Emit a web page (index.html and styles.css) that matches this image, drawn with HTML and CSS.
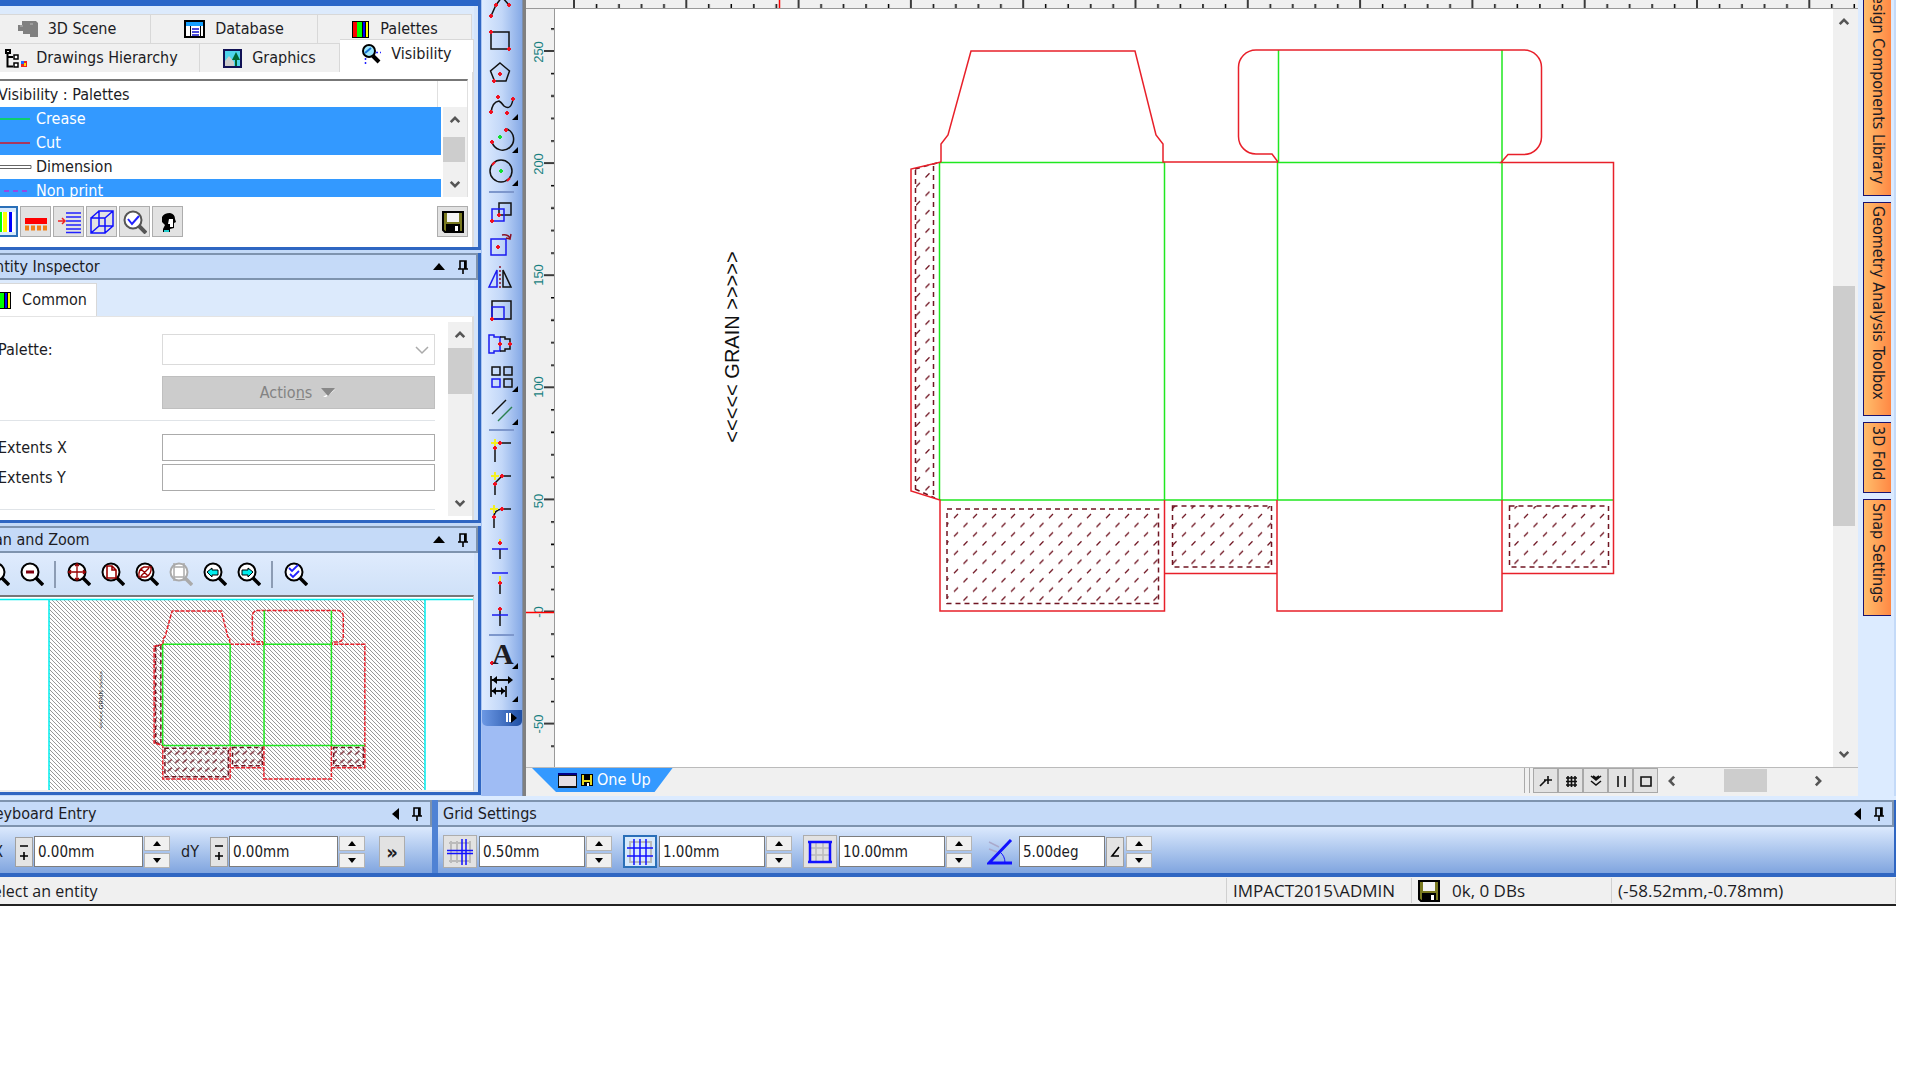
FILE: index.html
```html
<!DOCTYPE html>
<html lang="en">
<head>
<meta charset="UTF-8">
<meta name="viewport" content="width=device-width, initial-scale=1.0">
<title>Carton Designer - One Up</title>
<link rel="stylesheet" href="styles.css">
</head>
<body>

<!-- shared shapes -->
<svg class="defs" width="0" height="0" aria-hidden="true">
    <defs>
        <symbol id="i-up" viewBox="0 0 14 14"><path d="M2 9.500l5-5 5 5" fill="none" stroke="#555" stroke-width="3"/></symbol>
        <symbol id="i-down" viewBox="0 0 14 14"><path d="M2 4.500l5 5 5-5" fill="none" stroke="#555" stroke-width="3"/></symbol>
        <symbol id="i-left" viewBox="0 0 14 14"><path d="M9.500 2l-5 5 5 5" fill="none" stroke="#555" stroke-width="3"/></symbol>
        <symbol id="i-right" viewBox="0 0 14 14"><path d="M4.500 2l5 5-5 5" fill="none" stroke="#555" stroke-width="3"/></symbol>
        <symbol id="i-pin" viewBox="0 0 12 14"><path d="M3 1h6v8H3zM1 9h10M6 9v5" fill="none" stroke="#000" stroke-width="1.600"/><path d="M7 1h2v8H7z"/></symbol>
        <symbol id="i-palette" viewBox="0 0 19 19"><path d="M1 1h17v17H1z"/><path fill="#f00" d="M2 2h4v15H2z"/><path fill="#0f0" d="M6 2h5v15H6z"/><path fill="#00f" d="M12 2h2v15h-2z"/><path fill="#ff0" d="M15 2h2v15h-2z"/></symbol>
        <symbol id="i-floppy" viewBox="0 0 22 22"><path d="M1 1h20v20H3l-2-2z" fill="#7a7a20" stroke="#000" stroke-width="2"/><path d="M5 2h12v9H5z" fill="#f4f4f4"/><path d="M4 13h14v8H4z"/><path d="M13 15h3v5h-3z" fill="#fff"/></symbol>
        <symbol id="i-lens" viewBox="0 0 24 24"><circle cx="10" cy="10" r="8.500" fill="#fff" stroke="currentColor" stroke-width="2"/><path d="M16 16l7 7" stroke="currentColor" stroke-width="3.500"/></symbol>

        <pattern id="glue" width="19" height="18.400" patternUnits="userSpaceOnUse" x="952" y="513">
            <path d="M2 5l4-4M11.500 14l4-4" stroke="#701522" stroke-width="1.300"/>
        </pattern>
        <pattern id="glue-small" width="25" height="28" patternUnits="userSpaceOnUse" x="952" y="510">
            <path d="M4 20l14-12" stroke="#701522" stroke-width="4.500"/>
        </pattern>
        <pattern id="hatch" width="4" height="4" patternUnits="userSpaceOnUse">
            <path d="M-1-1l6 6M3-1l2 2M-1 3l2 2" stroke="#8c8c8c" stroke-width=".9"/>
        </pattern>

        <g id="cut">
            <path d="M941 162v-18l7-9 23-84h164l21 84 7 9v18h115"/>
            <path d="M1278 162l-6-8h-16a17.500 17.500 0 0 1-17.500-17.500V68A17.500 17.500 0 0 1 1256 50h268a17.500 17.500 0 0 1 17.500 18v69a17.500 17.500 0 0 1-17.500 17.500h-16l-7 8h112.500v411H1502"/>
            <path d="M941 162l-30 7v322l29 9v111h224.500V500M1164.500 573.500H1277M1277 500v111h225V500"/>
        </g>
        <g id="crease">
            <path d="M940 162.500h224M1278 162.500h224M940 500h673.500M939.500 162v338M1164.500 162v338M1277.500 162v338M1278.500 50v112M1502 50v450"/>
        </g>
        <g id="glue-edge">
            <path d="M915.500 170v319M933.500 166v332M915 169l22-6M915 489l20 9"/>
            <path d="M947 509h211.500v94.500H947zM1172.500 506h99v61h-99zM1509.500 506h99v61h-99z"/>
        </g>
        <path id="glue-area" d="M916 170l17-5v333l-17-7zM947 509h211.500v94.500H947zM1172.500 506h99v61h-99zM1509.500 506h99v61h-99z"/>
    </defs>
</svg>

<div class="app">
    <main class="work">

        <!-- docked panels -->
        <aside class="dock-left">
            <section class="panel">
                <div class="panel-strip"></div>
                <div class="tabs">
                    <div class="tab-row">
                        <button class="tab"><svg width="20" height="16" viewBox="0 0 20 16"><path d="M4 0h14l2 2v14h-8v-3H5v-3H0V4h4z" fill="#808080"/><path d="M2 5h3M12 3h3" stroke="#bbb"/></svg>3D Scene</button>
                        <button class="tab"><svg width="21" height="18" viewBox="0 0 21 18"><path d="M1 1h19v16H1z" fill="#fff" stroke="#000" stroke-width="2"/><path d="M2 2h17v4H2z" fill="#16a0ff"/><path d="M6.500 6v11M16.500 6v11" stroke="#000"/><path d="M8 9h7M8 12h7M8 15h7" stroke="#11c" stroke-width="1.500"/></svg>Database</button>
                        <button class="tab tab-last"><svg width="19" height="19"><use href="#i-palette"/></svg>Palettes</button>
                    </div>
                    <div class="tab-row">
                        <button class="tab tab-wide"><svg width="23" height="19" viewBox="0 0 23 19"><path d="M2.500 3v14.500H8M3 8h5M1 1h4v3H1z" fill="none" stroke="#000" stroke-width="2"/><path d="M9 6h4v4H9zM9 14h4v4H9z" fill="#fff" stroke="#000" stroke-width="1.500"/><path d="M16 12h6v6h-6z" fill="#e22"/><path d="M16 12h3v3h-3z" fill="#26f"/><path d="M19 14h2v3h-2z" fill="#fd0"/></svg>Drawings Hierarchy</button>
                        <button class="tab tab-mid"><svg width="19" height="19" viewBox="0 0 19 19"><path d="M1 1h17v17H1z" fill="#4fd4ec" stroke="#115" stroke-width="2"/><path d="M2 12l4-5 5 6v4H2z" fill="#ccc"/><path d="M13 3l4 8h-3v6h-2v-6H9z" fill="#063"/></svg>Graphics</button>
                        <button class="tab tab-active"><svg width="20" height="20" viewBox="0 0 20 20"><circle cx="8" cy="7" r="6" fill="#9fe8ff" stroke="#000" stroke-width="2"/><path d="M4 9l6-5" stroke="#1570d0" stroke-width="2"/><path d="M12 12l6 6" stroke="#000" stroke-width="4"/><path d="M15 8.500h5M4.500 14v6" stroke="#22f" stroke-width="1.500" stroke-dasharray="2 2"/></svg>Visibility</button>
                    </div>
                </div>
                <div class="panel-page visibility">
                    <div class="list">
                        <div class="list-head">Visibility : Palettes</div>
                        <div class="list-body">
                            <ul class="list-items">
                                <li class="selected"><svg width="32" height="6"><path d="M0 3h32" stroke="#00e040" stroke-width="1.500"/></svg>Crease</li>
                                <li class="selected"><svg width="32" height="6"><path d="M0 3h32" stroke="#d01828" stroke-width="1.500"/></svg>Cut</li>
                                <li><svg width="34" height="6"><path d="M-1 1.500h34v3H-1z" fill="#fff" stroke="#666"/></svg>Dimension</li>
                                <li class="selected"><svg width="32" height="6"><path d="M6 3h25" stroke="#b030e0" stroke-width="1.500" stroke-dasharray="5 4"/></svg>Non print</li>
                            </ul>
                            <div class="scroll-v list-scroll">
                                <button aria-label="Scroll up"><svg width="12" height="12"><use href="#i-up"/></svg></button>
                                <span class="thumb thumb-s"></span>
                                <button class="push" aria-label="Scroll down"><svg width="12" height="12"><use href="#i-down"/></svg></button>
                            </div>
                        </div>
                    </div>
                    <div class="button-row">
                        <button class="tool tool-on" aria-label="Palettes"><svg width="24" height="24" viewBox="0 0 24 24"><path fill="#fff" d="M0 2h24v20H0z"/><path fill="#0f0" d="M7 2h4v20H7z"/><path fill="#ff0" d="M12 2h4v20h-4z"/><path fill="#00f" d="M18 2h3v20h-3z"/></svg></button>
                        <button class="tool" aria-label="Line styles"><svg width="24" height="24" viewBox="0 0 24 24"><path fill="#f00" d="M1 8h22v6H1z"/><path d="M1 18h22" stroke="#f08018" stroke-width="5" stroke-dasharray="4 2"/></svg></button>
                        <button class="tool" aria-label="Layers"><svg width="24" height="24" viewBox="0 0 24 24"><path d="M9 3h15M9 7h15M9 11h15M9 15h15M9 19h15M9 22.500h15" stroke="#22f" stroke-width="1.500"/><path d="M1 11h7M5 8l3 3-3 3" fill="none" stroke="#e22" stroke-width="1.500"/></svg></button>
                        <button class="tool" aria-label="3D box"><svg width="24" height="24" viewBox="0 0 24 24"><path d="M1 8h14v15H1zM9 1h14v15H9zM1 8l8-7M15 8l8-7M1 23l8-7M15 23l8-7" fill="none" stroke="#11f" stroke-width="1.500"/></svg></button>
                        <button class="tool" aria-label="Inspect"><svg width="24" height="24" viewBox="0 0 24 24"><circle cx="10" cy="10" r="8.500" fill="#fff" stroke="#555" stroke-width="2"/><path d="M16 16l7 7" stroke="#555" stroke-width="4"/><path d="M5 9l4 5 7-8" fill="none" stroke="#22f" stroke-width="2"/></svg></button>
                        <button class="tool" aria-label="User"><svg width="24" height="24" viewBox="0 0 24 24"><path d="M6 7q2-4 8-4 5 1 5 6l1 3-2 1v5l-4 1v3H7v-3l2-4-3-3z"/><path d="M13 9h4v8h-3v-3h-2z" fill="#fff"/><path d="M8 20h5v2H8z" fill="#2cc"/></svg></button>
                        <button class="tool push-x" aria-label="Save"><svg width="22" height="22"><use href="#i-floppy"/></svg></button>
                    </div>
                </div>
            </section>

            <section class="panel">
                <header class="panel-head"><h2>Entity Inspector</h2><span class="caret-up"></span><svg width="12" height="14"><use href="#i-pin"/></svg></header>
                <div class="tabs tabs-single">
                    <button class="tab tab-common"><svg width="19" height="19"><use href="#i-palette"/></svg>Common</button>
                </div>
                <div class="panel-page inspector">
                    <form class="fields">
                        <div class="field">
                            <label for="palette">Palette:</label>
                            <span class="select-wrap">
                                <select id="palette" disabled><option></option></select>
                                <svg width="14" height="14" viewBox="0 0 14 14"><path d="M1 4l6 6 6-6" fill="none" stroke="#aaa" stroke-width="1.500"/></svg>
                            </span>
                        </div>
                        <button type="button" class="actions" disabled>Actio<u>n</u>s<svg width="16" height="10" viewBox="0 0 16 10"><path d="M2 9h3l10-8z" fill="#fff"/><path d="M0 0h14L7 8z" fill="#888"/></svg></button>
                        <hr>
                        <div class="field"><label for="ext-x">Extents X</label><input id="ext-x" type="text"></div>
                        <div class="field"><label for="ext-y">Extents Y</label><input id="ext-y" type="text"></div>
                        <hr class="last">
                    </form>
                    <div class="scroll-v">
                        <button aria-label="Scroll up"><svg width="12" height="12"><use href="#i-up"/></svg></button>
                        <span class="thumb thumb-m"></span>
                        <button class="push" aria-label="Scroll down"><svg width="12" height="12"><use href="#i-down"/></svg></button>
                    </div>
                </div>
            </section>

            <section class="panel">
                <header class="panel-head"><h2>Pan and Zoom</h2><span class="caret-up"></span><svg width="12" height="14"><use href="#i-pin"/></svg></header>
                <div class="zoom-bar">
                    <button aria-label="Zoom in"><svg width="24" height="24" viewBox="0 0 24 24"><use href="#i-lens"/></svg></button>
                    <button aria-label="Zoom out"><svg width="24" height="24" viewBox="0 0 24 24"><use href="#i-lens"/><path d="M6 10h8" stroke="#800010" stroke-width="3"/></svg></button>
                    <i class="bar-sep"></i>
                    <button aria-label="Zoom extents"><svg width="24" height="24" viewBox="0 0 24 24"><use href="#i-lens"/><path d="M1 10h18M10 1v18M8 4l2-2 2 2M8 16l2 2 2-2M4 8l-2 2 2 2M16 8l2 2-2 2" fill="none" stroke="#900" stroke-width="1.300"/></svg></button>
                    <button aria-label="Zoom page"><svg width="24" height="24" viewBox="0 0 24 24"><use href="#i-lens"/><path d="M6 4h5l4 4v8H6zM11 4v4h4" fill="none" stroke="#900" stroke-width="1.600"/></svg></button>
                    <button aria-label="Zoom design"><svg width="24" height="24" viewBox="0 0 24 24"><use href="#i-lens"/><path d="M4 15q-1-8 5-10h7q1 7-5 10zM6 7l7 7M6 14l8-8" fill="none" stroke="#900" stroke-width="1.400"/></svg></button>
                    <button class="off" aria-label="Zoom selection" disabled><svg width="24" height="24" viewBox="0 0 24 24"><use href="#i-lens"/><path d="M5 5h10v10H5zM5 1v18M15 1v18" fill="none" stroke="#aaa" stroke-width="1.500"/></svg></button>
                    <button aria-label="Previous view"><svg width="24" height="24" viewBox="0 0 24 24"><use href="#i-lens"/><path d="M4 10l5-4v2h6v5H9v2z" fill="#0ee" stroke="#000"/></svg></button>
                    <button aria-label="Next view"><svg width="24" height="24" viewBox="0 0 24 24"><use href="#i-lens"/><path d="M16 10l-5-4v2H5v5h6v2z" fill="#0ee" stroke="#000"/></svg></button>
                    <i class="bar-sep"></i>
                    <button aria-label="Zoom options"><svg width="24" height="24" viewBox="0 0 24 24"><use href="#i-lens"/><path d="M5 6l3 3 6-6M6 12l3 3 6-6" fill="none" stroke="#22f" stroke-width="1.800"/></svg></button>
                </div>
                <div class="preview">
                    <svg width="492" height="193" viewBox="-16 597 492 193">
                        <path d="M49 599h376v191H49z" fill="url(#hatch)"/>
                        <path d="M-16 599.500h492M49 599v191M425 599v191" stroke="#0ee" stroke-width="1.500"/>
                        <g transform="translate(-119.200 595.600) scale(.3)">
                            <use href="#glue-edge" class="thin glue-line"/>
                            <use href="#glue-area" fill="url(#glue-small)"/>
                            <use href="#cut" class="thin cut-line dashed"/>
                            <use href="#crease" class="thin crease-line"/>
                            <text class="grain" transform="translate(739 347) rotate(-90)" text-anchor="middle">&lt;&lt;&lt;&lt;&lt; GRAIN &gt;&gt;&gt;&gt;&gt;</text>
                        </g>
                    </svg>
                </div>
            </section>
        </aside>

        <!-- drawing tools -->
        <nav class="toolbox">
            <div class="toolbox-tools">
                <button aria-label="Line"><svg viewBox="0 0 32 32"><path d="M5 25l5-11 6-8 7 8"/><path class="r" d="M3 25h4M5 23v4M8 14h4M10 12v4M21 14h4M23 12v4"/></svg></button>
                <button aria-label="Rectangle"><svg viewBox="0 0 32 32"><path d="M5 8h18v17H5z"/><path class="r" d="M3 8h4M5 6v4M21 25h4M23 23v4"/></svg></button>
                <button aria-label="Polygon"><svg viewBox="0 0 32 32"><path d="M14 6l9.500 8L20 24H8.500l-4-10z"/><path class="r" d="M12 17h4M14 15v4M6 24h4M8 22v4"/></svg></button>
                <button aria-label="Spline"><svg viewBox="0 0 32 32"><path d="M5 23q1-11 8-12 2 1 5 5 7 5 9-7"/><path class="r" d="M3 22h4M5 20v4M10 7h4M12 5v4M19 23h4M21 21v4M25 9h4M27 7v4"/><path class="more" d="M32 24v6h-6z"/></svg></button>
                <button aria-label="Arc"><svg viewBox="0 0 32 32"><path d="M6 19A11 11 0 1 0 21 6"/><path class="r" d="M4 19h4M6 17v4M18 7h4M20 5v4"/><path class="g" d="M12 14h4M14 12v4"/><path class="more" d="M32 24v6h-6z"/></svg></button>
                <button aria-label="Circle"><svg viewBox="0 0 32 32"><circle cx="15" cy="15" r="11"/><path class="r" d="M6 9l3-3M21 25l3-3"/><path class="g" d="M13 15h4M15 13v4"/><path class="more" d="M32 24v6h-6z"/></svg></button>
                <hr>
                <button aria-label="Copy"><svg viewBox="0 0 32 32"><path d="M13 7h12v12H13z"/><path class="b" d="M6 13h12v12H6z"/><path class="r" d="M11 19h4M13 17v4M4 25h4M6 23v4"/></svg></button>
                <button aria-label="Rotate"><svg viewBox="0 0 32 32"><path class="b" d="M5 10h15v16H5z"/><path class="r" d="M10 18h4M12 16v4"/><path class="m" d="M16 6q7-1 8 4M20 9l4 1 1-5"/></svg></button>
                <button aria-label="Mirror"><svg viewBox="0 0 32 32"><path class="b" d="M11 8v17H3z"/><path d="M17 8v17h8z"/><path class="m" d="M14 4v24" stroke-dasharray="2 2"/></svg></button>
                <button aria-label="Scale"><svg viewBox="0 0 32 32"><path d="M6 6h19v18H6z"/><path class="b" d="M6 12h12v12H6z"/><path class="r" d="M4 24h4M6 22v4"/></svg></button>
                <button aria-label="Stretch"><svg viewBox="0 0 32 32"><path class="b" d="M14 9H8V7H3v18h5v-2h6z" stroke-dasharray="30 0"/><path d="M14 9h5v2h5v10h-5v2h-5"/><path class="r" d="M12 16h4M14 14v4M22 16h4M24 14v4"/></svg></button>
                <button aria-label="Array"><svg viewBox="0 0 32 32"><path d="M6 6h8v8H6zM18 6h8v8h-8zM18 18h8v8h-8z"/><path class="b" d="M6 18h8v8H6z"/><path class="more" d="M32 25v6h-6z"/></svg></button>
                <button aria-label="Offset"><svg viewBox="0 0 32 32"><path d="M6 20L20 6"/><path d="M12 27l14-14" stroke="#2a8050"/><path class="more" d="M32 25v6h-6z"/></svg></button>
                <hr>
                <button aria-label="Corner"><svg viewBox="0 0 32 32"><path d="M9 28V9h16"/><path class="y" d="M5 9h8M9 5v8"/><path class="r" d="M12 9h4M14 7v4M7 14h4M9 12v4"/></svg></button>
                <button aria-label="Chamfer"><svg viewBox="0 0 32 32"><path d="M9 28V16l7-7h9"/><path class="y" d="M5 9h8M9 5v8"/><path class="r" d="M14 9h4M16 7v4M7 17h4M9 15v4"/></svg></button>
                <button aria-label="Fillet"><svg viewBox="0 0 32 32"><path d="M8 28V17q0-7 8-8h9"/><path class="y" d="M4 9h8M8 5v8"/><path class="r" d="M14 9h4M16 7v4M6 17h4M8 15v4"/></svg></button>
                <button aria-label="Extend"><svg viewBox="0 0 32 32"><path d="M14 16v10"/><path class="b" d="M6 16h16"/><path class="y" d="M14 6v4"/><path class="r" d="M12 10h4M14 8v4"/></svg></button>
                <button aria-label="Trim"><svg viewBox="0 0 32 32"><path d="M14 18v10"/><path class="b" d="M6 7h16"/><path class="y" d="M14 10v5"/><path class="r" d="M12 17h4M14 15v4"/></svg></button>
                <button aria-label="Split"><svg viewBox="0 0 32 32"><path d="M14 10v17"/><path class="b" d="M6 16h16"/><path class="r" d="M12 10h4M14 8v4"/></svg></button>
                <hr>
                <button aria-label="Text"><span class="letter">A</span><svg viewBox="0 0 32 32"><path class="r" d="M4 24h4M6 22v4"/><path class="more" d="M32 24v6h-6z"/></svg></button>
                <button aria-label="Dimension"><svg viewBox="0 0 32 32"><path d="M5 4v21M5 8h20M5 19h14M20 14v11" stroke-width="1.800"/><path class="more" d="M6 8l5-4v8zM27 8l-5-4v8zM6 19l4-4v8zM19 19l-4-4v8zM32 24v6h-6z"/></svg></button>
            </div>
            <button class="toolbox-foot" aria-label="More tools"><svg viewBox="0 0 12 12"><path d="M1 1v9M4 1v9" stroke="#fff" stroke-width="2"/><path d="M5 1l6 5-6 5z"/></svg></button>
        </nav>

        <!-- drawing -->
        <section class="drawing">
            <div class="ruler-corner"></div>
            <svg class="ruler-top" height="9">
                <defs>
                    <pattern id="ticks-x" x="18" width="112.300" height="9" patternUnits="userSpaceOnUse">
                        <path d="M1 0v9M23.500 4v5M46 4v5M68.500 4v5M91 4v5" stroke="#000" stroke-width="1.500"/>
                    </pattern>
                </defs>
                <rect width="100%" height="8" fill="url(#ticks-x)"/>
                <path d="M224.500 0v8" stroke="#f00" stroke-width="1.500"/>
            </svg>
            <svg class="ruler-side" width="28" height="758" viewBox="526 9 28 758">
                <defs>
                    <pattern id="ticks-y" x="526" y="50" width="28" height="112.100" patternUnits="userSpaceOnUse">
                        <path d="M18 1h10M25 23.500h3M25 46h3M25 68.500h3M25 91h3" stroke="#000" stroke-width="1.500"/>
                    </pattern>
                </defs>
                <rect x="526" y="9" width="28" height="758" fill="url(#ticks-y)"/>
                <g class="ruler-num" text-anchor="middle">
                    <text transform="translate(543 52) rotate(-90)">250</text>
                    <text transform="translate(543 164) rotate(-90)">200</text>
                    <text transform="translate(543 275) rotate(-90)">150</text>
                    <text transform="translate(543 387) rotate(-90)">100</text>
                    <text transform="translate(543 501) rotate(-90)">50</text>
                    <text transform="translate(543 612) rotate(-90)">-0</text>
                    <text transform="translate(543 724) rotate(-90)">-50</text>
                </g>
                <path d="M526 612.500h28" stroke="#f00" stroke-width="1.500"/>
            </svg>
            <svg class="sheet" viewBox="555 9 1278 758" height="758">
                <use href="#glue-area" fill="url(#glue)"/>
                <use href="#glue-edge" class="glue-line"/>
                <use href="#crease" class="crease-line"/>
                <use href="#cut" class="cut-line"/>
                <text class="grain" transform="translate(739 347) rotate(-90)" text-anchor="middle">&lt;&lt;&lt;&lt;&lt; GRAIN &gt;&gt;&gt;&gt;&gt;</text>
            </svg>
            <div class="scroll-v sheet-scroll">
                <button aria-label="Scroll up"><svg width="12" height="12"><use href="#i-up"/></svg></button>
                <span class="thumb thumb-l"></span>
                <button class="push" aria-label="Scroll down"><svg width="12" height="12"><use href="#i-down"/></svg></button>
            </div>
            <footer class="sheet-foot">
                <button class="sheet-tab">
                    <svg width="19" height="15" viewBox="0 0 19 15"><path d="M0 0h19v15H0z" fill="#111"/><path d="M1 3h17v10H1z" fill="#e4dfe4"/><path d="M0 0h19v2H0z" fill="#008"/></svg>
                    <svg width="12" height="12" viewBox="0 0 12 12"><path d="M0 0h12v12H0z"/><path d="M1 1h2v10H1zM9 1h2v10H9zM3 6h6v2H3z" fill="#e8d820"/><path d="M6 9h2v3H6z" fill="#fff"/></svg>
                    One Up
                </button>
                <i class="grip"></i>
                <button class="view" aria-label="Snap"><svg viewBox="0 0 14 14"><path d="M1 12l6-6M5 6h8M9 2v8"/></svg></button>
                <button class="view" aria-label="Grid"><svg viewBox="0 0 14 14"><path d="M2 4h11M2 7.500h11M2 11h11M4 2v11M7.500 2v11M11 2v11"/></svg></button>
                <button class="view" aria-label="Show all"><svg viewBox="0 0 14 14"><path d="M2 2l5 4 5-4M2 7l5 4 5-4M4 2l3 2 3-2"/></svg></button>
                <button class="view" aria-label="Split"><svg viewBox="0 0 14 14"><path d="M4 2v11M11 2v11"/></svg></button>
                <button class="view" aria-label="Single"><svg viewBox="0 0 14 14"><path d="M2 3h10v9H2z"/></svg></button>
                <div class="scroll-h">
                    <button aria-label="Scroll left"><svg width="12" height="12"><use href="#i-left"/></svg></button>
                    <span class="thumb-h"></span>
                    <button aria-label="Scroll right"><svg width="12" height="12"><use href="#i-right"/></svg></button>
                </div>
            </footer>
        </section>

        <nav class="dock-right">
            <button class="side-tab side-tab-first">Design Components Library</button>
            <button class="side-tab side-tab-geo">Geometry Analysis Toolbox</button>
            <button class="side-tab side-tab-fold">3D Fold</button>
            <button class="side-tab side-tab-snap">Snap Settings</button>
        </nav>
    </main>

    <div class="dock-bottom">
        <section class="bar bar-keys">
            <header class="panel-head"><h2>Keyboard Entry</h2><span class="caret-left"></span><svg width="12" height="14"><use href="#i-pin"/></svg></header>
            <div class="bar-body">
                <label for="dx">dX</label>
                <button class="sign" aria-label="Change sign"><svg viewBox="0 0 10 20"><path d="M1 4h8M1 14h8M5 10v8"/></svg></button>
                <input id="dx" type="text" value="0.00mm">
                <span class="spin"><button aria-label="Increase"></button><button aria-label="Decrease"></button></span>
                <label for="dy" class="label-dy">dY</label>
                <button class="sign" aria-label="Change sign"><svg viewBox="0 0 10 20"><path d="M1 4h8M1 14h8M5 10v8"/></svg></button>
                <input id="dy" type="text" value="0.00mm">
                <span class="spin"><button aria-label="Increase"></button><button aria-label="Decrease"></button></span>
                <button class="tool expand">»</button>
            </div>
        </section>
        <section class="bar bar-grid">
            <header class="panel-head"><h2>Grid Settings</h2><span class="caret-left"></span><svg width="12" height="14"><use href="#i-pin"/></svg></header>
            <div class="bar-body">
                <div class="step">
                    <button class="tool" aria-label="Snap step"><svg width="26" height="26" viewBox="0 0 26 26"><path d="M2 4h22M2 22h22M4 2v22M10 2v22M23 2v22" stroke="#bbb" stroke-width="2"/><path d="M0 11.500h26M0 14.500h26M15 0v26M19 0v26" stroke="#11f" stroke-width="1.500"/></svg></button>
                    <input type="text" value="0.50mm" aria-label="Snap step">
                    <span class="spin"><button aria-label="Increase"></button><button aria-label="Decrease"></button></span>
                </div>
                <div class="step">
                    <button class="tool tool-on" aria-label="Grid step"><svg width="26" height="26" viewBox="0 0 26 26"><path d="M2 3h22M2 23h22M3 2v22M24 2v22" stroke="#bbb" stroke-width="2"/><path d="M0 9h26M0 17h26M7 0v26M13 0v26M19 0v26" stroke="#11f" stroke-width="1.500"/></svg></button>
                    <input type="text" value="1.00mm" aria-label="Grid step">
                    <span class="spin"><button aria-label="Increase"></button><button aria-label="Decrease"></button></span>
                </div>
                <div class="step">
                    <button class="tool" aria-label="Major grid"><svg width="26" height="26" viewBox="0 0 26 26"><path d="M3 9h20M3 16h20M9 3v20M16 3v20" stroke="#bbb" stroke-width="1.500"/><path d="M3 3h20v20H3zM1 3h24M1 23h24" fill="none" stroke="#11f" stroke-width="2.500"/></svg></button>
                    <input type="text" value="10.00mm" aria-label="Major grid">
                    <span class="spin"><button aria-label="Increase"></button><button aria-label="Decrease"></button></span>
                </div>
                <div class="step">
                    <button class="tool tool-flat" aria-label="Angle step"><svg width="26" height="26" viewBox="0 0 26 26"><path d="M2 3l10 5M2 10l8 3" stroke="#aac" stroke-width="1.500"/><path d="M24 1L2 24h23" fill="none" stroke="#11f" stroke-width="3"/><path d="M13 13q5 4 5 11" fill="none" stroke="#11f"/></svg></button>
                    <input class="short" type="text" value="5.00deg" aria-label="Angle step">
                    <button class="sign sign-angle" aria-label="Angle mode"><svg viewBox="0 0 10 20"><path d="M9 5L2 14h7"/></svg></button>
                    <span class="spin"><button aria-label="Increase"></button><button aria-label="Decrease"></button></span>
                </div>
            </div>
        </section>
    </div>

    <footer class="status">
        <span class="status-text">Select an entity</span>
        <span class="status-user">IMPACT2015\ADMIN</span>
        <span class="status-db"><svg width="22" height="22"><use href="#i-floppy"/></svg>0k, 0 DBs</span>
        <span class="status-pos">(-58.52mm,-0.78mm)</span>
    </footer>
</div>

</body>
</html>
```

FILE: styles.css
```css
* {
    box-sizing: border-box;
}

body {
    margin: 0;
    background: #fff;
    overflow-x: hidden;
    color: #1c1c24;
    font-family: "DejaVu Sans Condensed", "Noto Sans", sans-serif;
    font-size: 16px;
    line-height: 20px;
}

button,
input,
select {
    font: inherit;
    color: inherit;
    margin: 0;
    padding: 0;
    border-radius: 0;
}

button {
    background: none;
    border: none;
    cursor: pointer;
}

svg {
    display: block;
    flex: none;
}

h2 {
    margin: 0 auto 0 0;
    font-size: 16px;
    font-weight: normal;
}

.defs {
    position: absolute;
}

/* the window runs a little past the left edge */
.app {
    margin: 0 24px 0 -16px;
    background: #9fbcf4;
    border-bottom: 2px solid #222;
}

.work {
    display: grid;
    grid-template-columns: 498px 41px 1fr 38px;
    overflow: hidden;
    border-bottom: 4px solid #dcebff;
}

/* left dock */
.dock-left {
    background: #c3d9f7;
    border-right: 1px solid #a9c5f3;
}

.panel {
    border-right: 3px solid #2f66c2;
    border-bottom: 3px solid #2f66c2;
    background: #d4e4fa;
    margin-bottom: 3px;
    padding-right: 4px;
}

.panel:last-child {
    margin-bottom: 0;
}

.panel-strip {
    height: 6px;
    margin-right: -4px;
    background: #2a66c8;
}

.panel-head {
    display: flex;
    align-items: center;
    gap: 12px;
    height: 27px;
    margin-right: -4px;
    padding: 0 7px 0 2px;
    background: #c5daf8;
    border: 2px solid #7e93ae;
    border-left: none;
}

.caret-up {
    border: 6px solid transparent;
    border-top: none;
    border-bottom: 7px solid #000;
}

.caret-left {
    border: 6px solid transparent;
    border-left: none;
    border-right: 7px solid #000;
}

.tabs {
    padding-top: 8px;
    background: #dceafc;
}

.tab-row {
    display: flex;
    height: 29px;
}

.tab {
    display: flex;
    align-items: center;
    justify-content: center;
    gap: 10px;
    width: 167px;
    background: #f0f0f0;
    border: 1px solid #d8d8d8;
    border-width: 1px 1px 0 0;
}

.tab-last {
    width: 154px;
}

.tab-wide {
    width: 216px;
    gap: 8px;
}

.tab-mid {
    width: 140px;
}

.tab-active {
    width: 134px;
    height: 33px;
    margin-top: -4px;
    padding-bottom: 4px;
    background: #fff;
}

.tabs-single {
    height: 36px;
    padding-top: 3px;
}

.tab-common {
    height: 33px;
    width: 113px;
    background: #fff;
}

.panel-page {
    background: #fff;
    border-right: 2px solid #dcdcdc;
}

.visibility {
    height: 175px;
    padding: 7px 4px 0 14px;
}

.list {
    border-top: 2px solid #777;
    border-right: 1px solid #e0e0e0;
    width: 470px;
}

.list-head {
    height: 26px;
    width: 440px;
    padding-top: 4px;
    border-right: 1px solid #e0e0e0;
}

.list-body {
    display: flex;
    height: 90px;
    overflow: hidden;
}

.list-items {
    flex: 1;
    margin: 0;
    padding: 0;
    list-style: none;
}

.list-items li {
    display: flex;
    align-items: center;
    height: 24px;
}

.list-items svg {
    width: 34px;
    margin-right: 4px;
}

.list-items .selected {
    background: #3399ff;
    color: #fff;
}

.list-scroll {
    margin-left: 2px;
}

.scroll-v {
    display: flex;
    flex-direction: column;
    align-items: stretch;
    width: 24px;
    background: #f0f0f0;
}

.scroll-v button {
    display: flex;
    align-items: center;
    justify-content: center;
    height: 26px;
}

.scroll-v .push {
    margin-top: auto;
}

.thumb {
    background: #cdcdcd;
}

.thumb-s {
    height: 25px;
    margin: 4px 2px 0 0;
}

.thumb-m {
    height: 46px;
}

.thumb-l {
    height: 240px;
    margin-top: 251px;
}

.button-row {
    display: flex;
    gap: 2px;
    margin: 9px 0 0 -11px;
}

.tool {
    display: flex;
    align-items: center;
    justify-content: center;
    width: 31px;
    height: 31px;
    background: #e2e2e2;
    border: 1px solid #adadad;
}

.tool-on {
    background: #d8eafc;
    border: 2px solid #2a6fb8;
}

.tool-flat {
    background: none;
    border: none;
}

.push-x {
    margin-left: auto;
}

.inspector {
    display: flex;
    height: 204px;
    padding: 5px 0 4px 14px;
    border-top: 1px solid #e4e4e4;
}

.fields {
    flex: 1;
    padding-top: 12px;
    padding-right: 13px;
}

.field {
    display: flex;
    align-items: center;
    justify-content: space-between;
    margin-bottom: 3px;
}

.field input {
    width: 273px;
    height: 27px;
    border: 1px solid #ababab;
}

.select-wrap {
    position: relative;
    width: 273px;
}

.select-wrap select {
    display: block;
    width: 100%;
    height: 31px;
    appearance: none;
    background: #fff;
    border: 1px solid #ccc;
}

.select-wrap svg {
    position: absolute;
    right: 6px;
    top: 9px;
}

.actions {
    display: flex;
    align-items: center;
    justify-content: center;
    width: 273px;
    height: 33px;
    margin: 11px 0 0 auto;
    background: #ccc;
    border: 1px solid #bfbfbf;
    color: #838383;
}

.actions svg {
    margin-left: 9px;
}

.fields hr {
    margin: 11px 0 13px;
    border: none;
    border-top: 1px solid #e0e4e8;
}

.fields .last {
    margin-top: 18px;
    margin-bottom: 0;
}

/* pan and zoom */
.zoom-bar {
    display: flex;
    align-items: center;
    gap: 10px;
    height: 42px;
    padding-left: 2px;
    background: linear-gradient(#dfebfd, #cfe1f8);
}

.zoom-bar button {
    width: 24px;
    height: 24px;
    color: #000;
}

.zoom-bar .off {
    color: #aaa;
}

.bar-sep {
    width: 2px;
    height: 27px;
    background: #8c9cb4;
    margin: 0 1px 0 0;
}

.preview {
    background: #fff;
    border-top: 2px solid #777;
    border-right: 1px solid #ccc;
    border-bottom: 2px solid #eee;
    overflow: hidden;
}

/* carton lines */
.cut-line {
    fill: none;
    stroke: #e8202a;
    stroke-width: 1.5;
}

.crease-line {
    fill: none;
    stroke: #20e820;
    stroke-width: 1.5;
}

.glue-line {
    fill: none;
    stroke: #701522;
    stroke-width: 1.5;
    stroke-dasharray: 5 4;
}

.thin {
    stroke-width: 5;
}

.thin.glue-line {
    stroke-dasharray: 14 10;
}

.dashed {
    stroke-dasharray: 14 4;
}

.grain {
    font-family: "Liberation Sans", Arial, sans-serif;
    font-size: 20px;
    fill: #111;
}

/* drawing tools */
.toolbox {
    border-right: 1px solid #7c8fae;
    overflow: hidden;
}

.toolbox-tools {
    margin-top: -10px;
    padding-bottom: 6px;
    background: linear-gradient(90deg, #deebfe, #c2d7f8 50%, #85a9e6);
}

.toolbox-tools button {
    position: relative;
    display: block;
    width: 40px;
    height: 33px;
}

.toolbox-tools svg {
    width: 32px;
    height: 32px;
    margin-left: 4px;
    fill: none;
    stroke: #111;
    stroke-width: 1.5;
}

.toolbox-tools hr {
    width: 25px;
    height: 2px;
    margin: 3px 0 2px 7px;
    border: none;
    background: #7d97cc;
}

.toolbox-tools .r { stroke: #f01020; stroke-width: 2; }
.toolbox-tools .g { stroke: #10e030; stroke-width: 2; }
.toolbox-tools .b { stroke: #1a1af0; }
.toolbox-tools .m { stroke: #8a1024; }
.toolbox-tools .y { stroke: #f4f020; stroke-width: 2; }
.toolbox-tools .more { fill: #000; stroke: none; }

.letter {
    position: absolute;
    left: 10px;
    top: 2px;
    font: bold 30px/28px "Liberation Serif", serif;
}

.toolbox-foot {
    display: flex;
    align-items: center;
    justify-content: flex-end;
    width: 100%;
    height: 16px;
    padding-right: 4px;
    background: linear-gradient(90deg, #6c98e4, #1f4fa4);
    border-radius: 0 0 5px 5px;
}

.toolbox-foot svg {
    width: 12px;
    height: 12px;
}

/* drawing area */
.drawing {
    display: grid;
    grid-template-columns: 29px 1fr 25px;
    grid-template-rows: 9px 758px 29px;
    background: #f0f0f0;
    border-left: 3px solid #808080;
    min-width: 0;
}

.ruler-corner,
.ruler-top {
    border-bottom: 1px solid #999;
}

.ruler-top {
    grid-column: 2 / 4;
    width: 100%;
    background: #f0f0f0;
}

.ruler-side {
    border-right: 1px solid #999;
    width: 29px;
}

.ruler-num {
    font-family: "Liberation Sans", Arial, sans-serif;
    font-size: 13px;
    fill: #188080;
}

.sheet {
    width: 100%;
    background: #fff;
}

.sheet-scroll {
    width: 22px;
}

.sheet-foot {
    grid-column: 1 / 4;
    display: flex;
    align-items: flex-start;
    border-top: 1px solid #bbb;
    min-width: 0;
}

.sheet-tab {
    display: flex;
    align-items: center;
    gap: 4px;
    height: 24px;
    margin-right: auto;
    padding: 0 22px 0 32px;
    background: #3399ff;
    clip-path: polygon(6px 0, 100% 0, calc(100% - 18px) 100%, 30px 100%);
    color: #fff;
}

.grip {
    width: 6px;
    height: 25px;
    margin-right: 3px;
    border: 1px solid #aaa;
    border-width: 0 1px;
}

.view {
    display: flex;
    align-items: center;
    justify-content: center;
    width: 25px;
    height: 25px;
    background: #e2e2e2;
    border: 1px solid #a8a8a8;
}

.view svg {
    width: 14px;
    height: 14px;
    fill: none;
    stroke: #111;
    stroke-width: 1.6;
}

.scroll-h {
    display: flex;
    align-items: center;
    justify-content: space-between;
    width: 200px;
    height: 25px;
    padding: 0 34px 0 8px;
}

.thumb-h {
    width: 43px;
    height: 23px;
    background: #cdcdcd;
}

/* right dock */
.dock-right {
    display: flex;
    flex-direction: column;
    gap: 6px;
    padding: 0 3px 0 5px;
    background: #dcebff;
    border-right: 2px solid #c4daf8;
}

.side-tab {
    flex: none;
    writing-mode: vertical-rl;
    padding-top: 3px;
    text-align: left;
    background: linear-gradient(90deg, #ffbe6c, #ff8844);
    border: 1px solid #1a1470;
    border-right: none;
}

.side-tab-first {
    height: 216px;
    margin-top: -20px;
}

.side-tab-geo { height: 214px; }
.side-tab-fold { height: 71px; }
.side-tab-snap { height: 117px; }

/* bottom dock */
.dock-bottom {
    display: grid;
    grid-template-columns: 448px 1fr;
    gap: 6px;
    background: #4f82d4;
    border-bottom: 4px solid #2f66c2;
}

.bar .panel-head {
    margin-right: 0;
}

.bar-grid {
    border-right: 2px solid #2f66c2;
}

.bar-grid .panel-head {
    padding-left: 5px;
}

.bar-body {
    display: flex;
    align-items: center;
    height: 46px;
    padding-top: 3px;
    background: linear-gradient(#dbe9fd, #80a5df);
}

.bar-keys .bar-body label {
    width: 31px;
}

.bar-keys .bar-body .label-dy {
    width: 40px;
    padding-left: 11px;
}

.bar-body input {
    width: 109px;
    height: 31px;
    padding: 0 3px;
    border: 1px solid #7d7d7d;
    background: #fff;
    font-size: 15px;
}

.sign {
    display: flex;
    align-items: center;
    justify-content: center;
    width: 18px;
    height: 30px;
    margin-right: 1px;
    background: #e4e4e4;
    border: 1px solid #a0a0a0;
}

.sign svg {
    width: 10px;
    height: 20px;
    fill: none;
    stroke: #000;
    stroke-width: 1.6;
}

.sign-angle {
    margin: 0 1px;
}

.spin {
    display: flex;
    flex-direction: column;
    gap: 2px;
    margin-left: 1px;
}

.spin button {
    display: flex;
    align-items: center;
    justify-content: center;
    width: 26px;
    height: 15px;
    background: #f0f0f0;
    border: 1px solid #b4b4b4;
}

.spin button::before {
    content: "";
    border: 4px solid transparent;
    border-top: none;
    border-bottom: 5px solid #000;
}

.spin button:last-child::before {
    border-top: 5px solid #000;
    border-bottom: none;
}

.expand {
    width: 26px;
    margin-left: 14px;
    font-size: 20px;
    font-weight: bold;
}

.bar-grid .bar-body {
    gap: 11px;
    padding-left: 5px;
}

.step {
    display: flex;
    align-items: center;
}

.step .tool {
    width: 34px;
    height: 33px;
    margin-right: 2px;
}

.step input {
    width: 106px;
}

.step .short {
    width: 86px;
}

/* status bar */
.status {
    display: flex;
    align-items: center;
    height: 27px;
    background: #f0f0f0;
    font-family: "Open Sans", "Noto Sans", sans-serif;
    font-size: 17px;
}

.status span {
    display: flex;
    align-items: center;
    height: 25px;
    padding-left: 6px;
    border-left: 1px solid #d0d0d0;
}

.status .status-text {
    flex: 1;
    padding-left: 0;
    border: none;
    font-size: 16px;
}

.status .status-user {
    width: 185px;
}

.status .status-db {
    width: 200px;
    gap: 12px;
}

.status .status-pos {
    width: 285px;
    border-right: 1px solid #d0d0d0;
}
```
